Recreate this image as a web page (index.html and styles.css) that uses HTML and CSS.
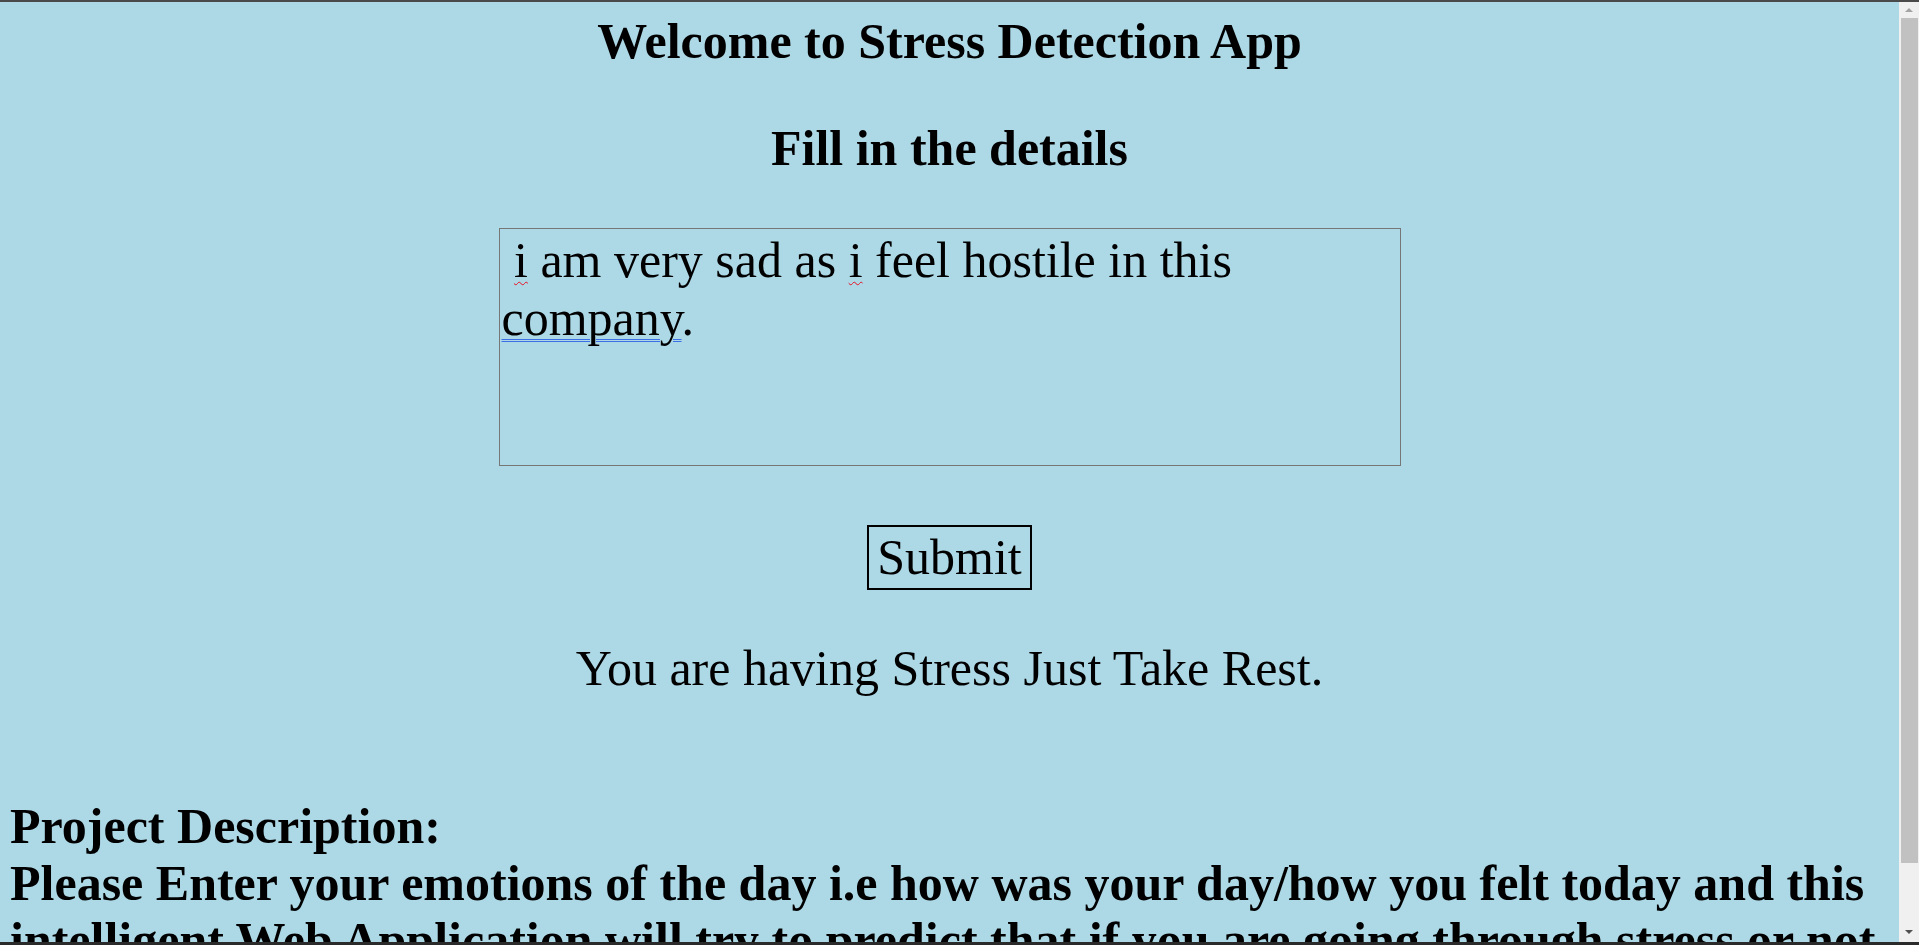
FILE: index.html
```html
<!DOCTYPE html>
<html lang="en">
<head>
<meta charset="utf-8">
<title>Stress Detection App</title>
<link rel="stylesheet" href="styles.css">
</head>
<body>
<div class="frame">
  <div class="topline"></div>
  <div class="window">
    <main class="page">
      <h1 class="title">Welcome to Stress Detection App</h1>
      <h1 class="subtitle">Fill in the details</h1>
      <form class="form">
        <div class="input" contenteditable="true" role="textbox" aria-multiline="true" spellcheck="false"> <span class="spell">i</span> am very sad as <span class="spell">i</span> feel hostile in this <span class="grammar">company</span>.</div>
        <button type="button" class="submit">Submit</button>
      </form>
      <p class="result">You are having Stress Just Take Rest.</p>
      <h2 class="description">Project Description:<br>Please Enter your emotions of the day i.e how was your day/how you felt today and this intelligent Web Application will try to predict that if you are going through stress or not</h2>
    </main>
    <div class="scrollbar">
      <div class="sb-btn sb-up">
        <svg width="20" height="16" viewBox="0 0 20 16"><polygon points="6,10 14,10 10,6" fill="#a3a3a3"/></svg>
      </div>
      <div class="sb-thumb"></div>
      <div class="sb-space"></div>
      <div class="sb-btn sb-down">
        <svg width="20" height="17" viewBox="0 0 20 17"><polygon points="6,5 14,5 10,9" fill="#505050"/></svg>
      </div>
    </div>
  </div>
  <div class="bottomline"></div>
</div>
</body>
</html>
```
FILE: styles.css
```css
html, body {
  margin: 0;
  height: 100%;
}

body {
  background: #add8e6;
  color: #000;
  font-family: "Liberation Serif", "Times New Roman", serif;
  overflow: hidden;
}

.frame {
  display: flex;
  flex-direction: column;
  height: 100vh;
}

.topline {
  flex: none;
  height: 2px;
  background: #4a4a4a;
}

.bottomline {
  flex: none;
  height: 3px;
  background: #2b2b2b;
}

.window {
  flex: 1;
  min-height: 0;
  display: flex;
}

.page {
  flex: 1;
  min-width: 0;
  overflow: hidden;
  padding: 0 8px;
}

.title,
.subtitle {
  margin: 0;
  font-size: 50px;
  line-height: 57px;
  font-weight: bold;
  text-align: center;
}

.title {
  margin-top: 11px;
}

.subtitle {
  margin-top: 50px;
}

.form {
  margin: 51px 0 0;
  display: flex;
  flex-direction: column;
  align-items: center;
}

.input {
  box-sizing: border-box;
  width: 902px;
  height: 238px;
  border: 1px solid #767676;
  padding: 2px 2px 2px;
  font-size: 50px;
  line-height: 58px;
  white-space: pre-wrap;
  text-align: left;
  overflow: hidden;
  outline: none;
  background: transparent;
}

.spell {
  text-decoration: underline wavy #e81123;
  text-decoration-thickness: 1px;
  text-underline-offset: 4px;
}

.grammar {
  text-decoration: underline double #3c6fe6;
  text-decoration-thickness: 1px;
  text-underline-offset: 4px;
}

.submit {
  margin-top: 59px;
  box-sizing: border-box;
  height: 65px;
  border: 2px solid #000;
  border-radius: 0;
  padding: 2px 8px;
  background: transparent;
  color: #000;
  font-family: inherit;
  font-size: 50px;
  line-height: 57px;
}

.result {
  margin: 50px 0 0;
  font-size: 50px;
  line-height: 57px;
  text-align: center;
}

.description {
  margin: 101px 0 0 2px;
  font-size: 50px;
  line-height: 57px;
  font-weight: bold;
}

.scrollbar {
  flex: none;
  width: 20px;
  background: #f0f0f0;
  display: flex;
  flex-direction: column;
}

.sb-btn {
  flex: none;
  display: flex;
}

.sb-up {
  height: 16px;
}

.sb-down {
  height: 17px;
}

.sb-thumb {
  flex: none;
  height: 845px;
  width: 17px;
  margin-left: 2px;
  background: #c1c1c1;
}

.sb-space {
  flex: 1;
}
```
